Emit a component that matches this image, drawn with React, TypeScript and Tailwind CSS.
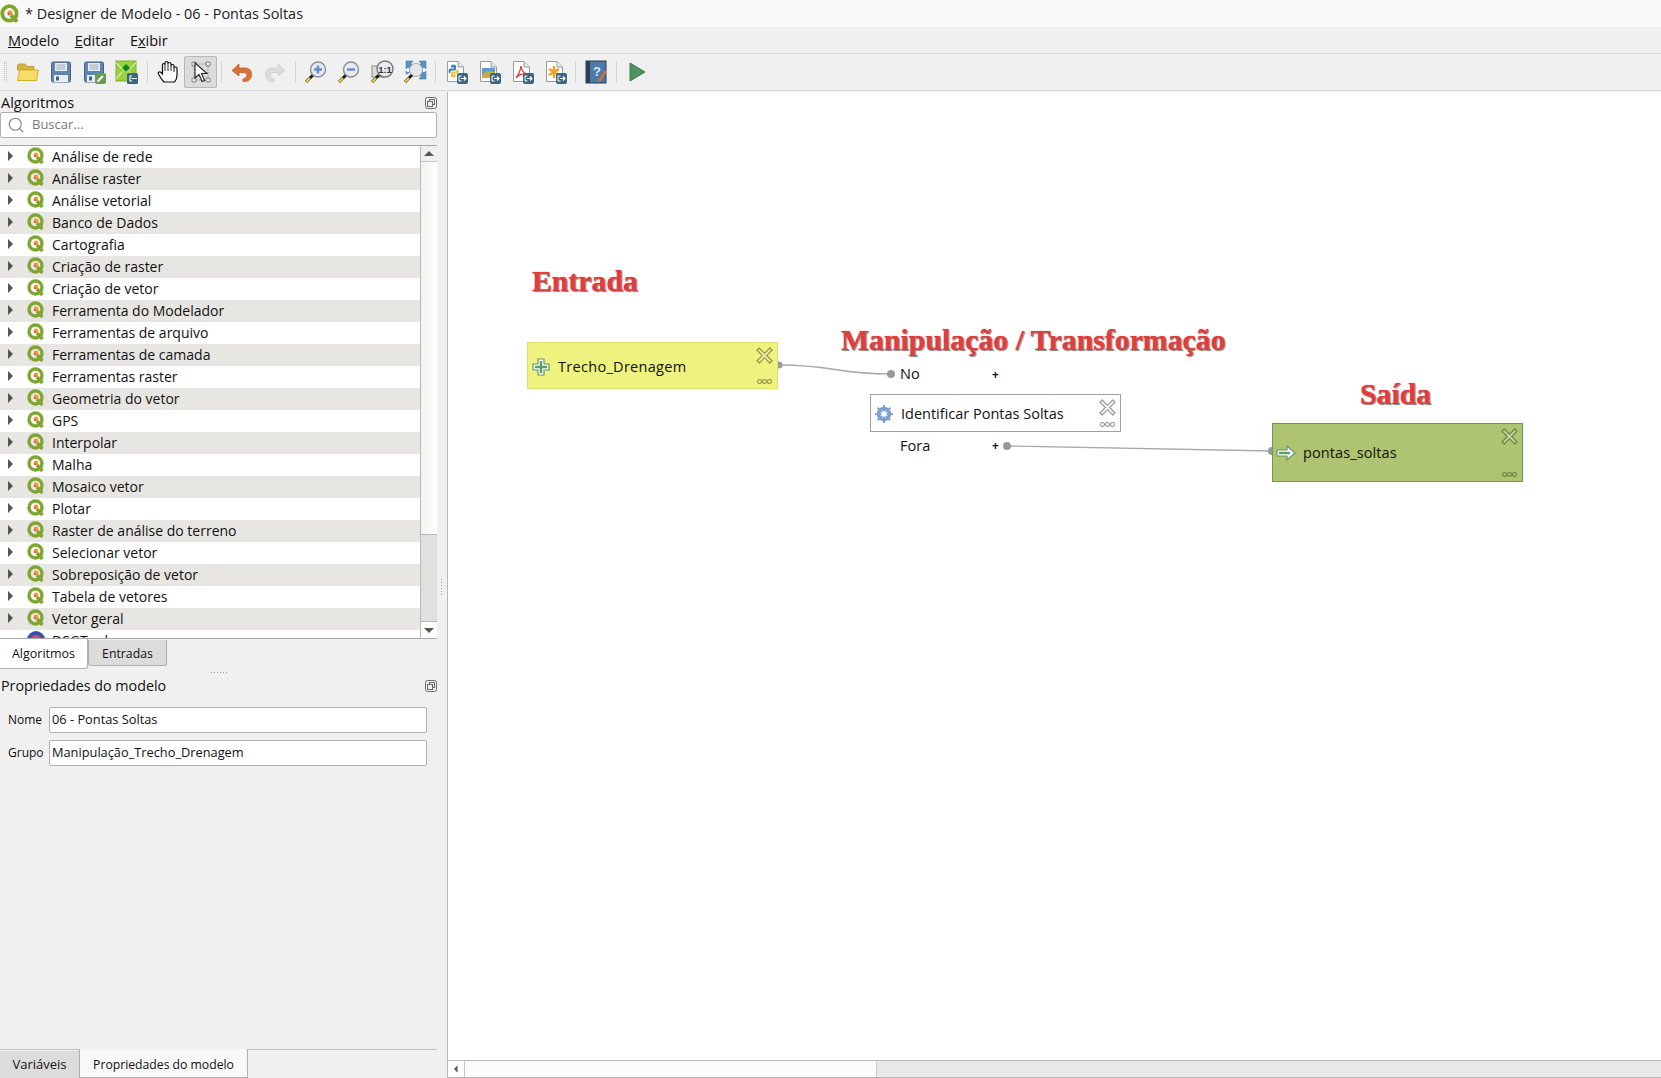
import { ChevronLeft, Search } from "lucide-react";

const font = "font-['Open_Sans','Noto_Sans',sans-serif]";

const algorithms = [
  "Análise de rede",
  "Análise raster",
  "Análise vetorial",
  "Banco de Dados",
  "Cartografia",
  "Criação de raster",
  "Criação de vetor",
  "Ferramenta do Modelador",
  "Ferramentas de arquivo",
  "Ferramentas de camada",
  "Ferramentas raster",
  "Geometria do vetor",
  "GPS",
  "Interpolar",
  "Malha",
  "Mosaico vetor",
  "Plotar",
  "Raster de análise do terreno",
  "Selecionar vetor",
  "Sobreposição de vetor",
  "Tabela de vetores",
  "Vetor geral",
];

function QgisIcon({ size = 18 }: { size?: number }) {
  return (
    <svg width={size} height={size} viewBox="0 0 18 18" className="shrink-0">
      <circle cx="8.5" cy="8.5" r="6.5" fill="none" stroke="#7fa62f" strokeWidth="3.4" />
      <path d="M10 10 L15.5 16" stroke="#7fa62f" strokeWidth="3.4" />
      <circle cx="9" cy="8" r="2.4" fill="#ee9b3e" />
      <circle cx="8" cy="9" r="1.1" fill="#d9534f" />
    </svg>
  );
}

function ExportBadge() {
  return (
    <g>
      <rect x="13" y="13" width="11" height="11" rx="2" fill="#3e6480" />
      <path d="M15 16 H17.5 M15 16 V21 H17.5" stroke="#fff" strokeWidth="1" fill="none" />
      <path d="M17 18.5 H22 M20 16.5 L22 18.5 L20 20.5" stroke="#fff" strokeWidth="1.2" fill="none" />
    </g>
  );
}

function Page({ children }: { children?: React.ReactNode }) {
  return (
    <svg width="24" height="24" viewBox="0 0 24 24">
      <path d="M3.5 1.5 H14 L19.5 7 V21.5 H3.5 Z" fill="#fff" stroke="#9a9a9a" />
      <path d="M14 1.5 V7 H19.5" fill="#e8e8e8" stroke="#9a9a9a" />
      {children}
      <ExportBadge />
    </svg>
  );
}

function Floppy({ pencil }: { pencil?: boolean }) {
  return (
    <svg width="24" height="24" viewBox="0 0 24 24">
      <path d="M2.5 3.5 Q2.5 2 4 2 H20 Q21.5 2 21.5 3.5 V20.5 Q21.5 22 20 22 H4 Q2.5 22 2.5 20.5 Z" fill="#5e85ad" stroke="#41658c" />
      <rect x="6" y="3" width="12" height="8" fill="#e9edf0" />
      <path d="M7.5 5 H16.5 M7.5 7 H16.5 M7.5 9 H16.5" stroke="#8a9aaa" strokeWidth="0.8" />
      <rect x="5" y="15" width="14" height="7" fill="#e9edf0" />
      <rect x="7" y="16.5" width="3" height="4" fill="#41658c" />
      {pencil && (
        <g>
          <rect x="13" y="13" width="11" height="11" rx="2" fill="#6b9a55" />
          <path d="M15.5 21.5 L21 16" stroke="#fff" strokeWidth="2" />
        </g>
      )}
    </svg>
  );
}

function Magnifier({ children }: { children?: React.ReactNode }) {
  return (
    <svg width="24" height="24" viewBox="0 0 24 24">
      <path d="M2 22 L9 15" stroke="#1c1c1c" strokeWidth="3" />
      <path d="M2 22 L6 18" stroke="#e8c94a" strokeWidth="2.4" />
      <circle cx="14" cy="9.5" r="7.5" fill="#e7eaee" stroke="#8b8f94" strokeWidth="1.4" />
      {children}
    </svg>
  );
}

function ToolButton({ children, active }: { children: React.ReactNode; active?: boolean }) {
  return (
    <div
      className={`flex h-[32px] w-[33px] shrink-0 items-center justify-center rounded-[2px] ${
        active ? "border border-[#b8b8b8] bg-[#dcdcdc]" : ""
      }`}
    >
      {children}
    </div>
  );
}

function Separator() {
  return <div className="mx-[3.5px] h-[22px] w-px shrink-0 bg-[#d4d4d4]" />;
}

function Toolbar() {
  return (
    <div className="flex h-[38px] shrink-0 items-center border-y border-[#d8d8d8] bg-[#f0f0f0]">
      <div className="ml-[4px] mr-[4px] h-[20px] w-[3px] border-x border-dotted border-[#c4c4c4]" />
      <ToolButton>
        <svg width="24" height="24" viewBox="0 0 24 24">
          <path d="M1.5 6 Q1.5 4 3.5 4 H9 L11 6.5 H18 V10 H1.5 Z" fill="#d9b53f" stroke="#c29a2c" />
          <path d="M1.5 20.5 L3.5 10 H22.5 L20.5 20.5 Z" fill="#f7dc6a" stroke="#d0ac34" />
        </svg>
      </ToolButton>
      <ToolButton>
        <Floppy />
      </ToolButton>
      <ToolButton>
        <Floppy pencil />
      </ToolButton>
      <ToolButton>
        <svg width="24" height="24" viewBox="0 0 24 24">
          <rect x="1" y="1" width="20" height="20" fill="#9bd13f" stroke="#7fae33" />
          <path d="M1 3 L11 12 L21 3 M1 19 L8 11 M21 19 L14 11" stroke="#fff" strokeWidth="1" fill="none" />
          <path d="M11 4 L15 8 L11 12 L7 8 Z" fill="#0a8a1c" />
          <rect x="12" y="13" width="11" height="11" rx="1.5" fill="#3e6480" />
          <path d="M15 16 H17 M15 16 V21 H17 M16.5 18.5 H22" stroke="#fff" strokeWidth="1.1" fill="none" />
        </svg>
      </ToolButton>
      <Separator />
      <ToolButton>
        <svg width="24" height="24" viewBox="0 0 24 24">
          <path
            d="M8 22 Q6 20 3 15 Q1.500 12.500 3 12 Q4.500 11.500 6.500 14 V5 Q6.500 3.500 7.800 3.500 Q9 3.500 9 5 V3 Q9 1.500 10.500 1.500 Q12 1.500 12 3 V4 Q12 2.500 13.500 2.500 Q15 2.500 15 4 V6 Q15 4.500 16.500 4.500 Q18 4.500 18 6 V8 Q18.500 7 19.800 7 Q21 7 21 8.500 V15 Q21 19 18.500 22 Z"
            fill="#fff"
            stroke="#111"
            strokeWidth="1.200"
          />
          <path d="M9 5 V11 M12 4 V11 M15 6 V11 M18 8 V12" stroke="#111" strokeWidth="0.900" />
        </svg>
      </ToolButton>
      <ToolButton active>
        <svg width="24" height="24" viewBox="0 0 24 24">
          <path d="M3 2 H7 V6 H3 Z M17 2 H21 V6 H17 Z M3 18 H7 V22 H3 Z M17 18 H21 V22 H17 Z" fill="#e8e8e8" stroke="#777" strokeWidth="0.800" />
          <path d="M7 4 H17 M5 6 V18 M7 20 H17 M19 6 V18" stroke="#777" strokeDasharray="1.500 1.500" strokeWidth="0.800" />
          <path d="M6 3 L6 18 L10 14.500 L13 21.500 L15.500 20.500 L12.500 13.500 L18 13.500 Z" fill="#fff" stroke="#222" strokeWidth="1.100" />
        </svg>
      </ToolButton>
      <Separator />
      <ToolButton>
        <svg width="24" height="24" viewBox="0 0 24 24">
          <path d="M9 4 L2 10.500 L9 16 V12.500 H14 Q17 12.500 17 15.500 Q17 18 13 19 V21.500 H15.500 Q21.500 20.500 21.500 14.500 Q21.500 8 15 8 H9 Z" fill="#d9703a" stroke="#c45e2b" strokeWidth="0.800" />
        </svg>
      </ToolButton>
      <ToolButton>
        <svg width="24" height="24" viewBox="0 0 24 24">
          <path d="M15 4 L22 10.500 L15 16 V12.500 H10 Q7 12.500 7 15.500 Q7 18 11 19 V21.500 H8.500 Q2.500 20.500 2.500 14.500 Q2.500 8 9 8 H15 Z" fill="#dcdcdc" stroke="#cfcfcf" strokeWidth="0.800" />
        </svg>
      </ToolButton>
      <Separator />
      <ToolButton>
        <Magnifier>
          <path d="M14 5.500 V13.500 M10 9.500 H18" stroke="#5b8fd0" strokeWidth="2.400" />
        </Magnifier>
      </ToolButton>
      <ToolButton>
        <Magnifier>
          <path d="M10 9.500 H18" stroke="#5b8fd0" strokeWidth="2.400" />
        </Magnifier>
      </ToolButton>
      <ToolButton>
        <svg width="24" height="24" viewBox="0 0 24 24">
          <rect x="2" y="6" width="12" height="11" fill="#ddd" stroke="#888" />
          <path d="M2 22 L9 15" stroke="#1c1c1c" strokeWidth="3" />
          <path d="M2 22 L6 18" stroke="#e8c94a" strokeWidth="2.400" />
          <circle cx="15" cy="9" r="8" fill="#e7eaee" stroke="#777" strokeWidth="1.400" />
          <text x="15" y="12.500" textAnchor="middle" fontSize="9.500" fontWeight="700" fill="#333" fontFamily="Liberation Sans">
            1:1
          </text>
        </svg>
      </ToolButton>
      <ToolButton>
        <svg width="24" height="24" viewBox="0 0 24 24">
          <path d="M3 1 H10 L8 3.500 L10.500 6 L7 9 L5 7 L3 9 Z M23 1 H16 L18 3.500 L15.500 6 L19 9 L21 7 L23 9 Z M23 19 H16 L18 16.500 L15.500 14 L19 11 L21 13 L23 11 Z M3 11 L5 13 L7 11 L6 13 L3 14 Z" fill="#5b8fc4" stroke="#4a7cae" strokeWidth="0.600" />
          <circle cx="13" cy="10" r="6.500" fill="#e4e6e8" stroke="#a8a8a8" />
          <path d="M2 22 L9 15" stroke="#1c1c1c" strokeWidth="3" />
          <path d="M2 22 L6 18" stroke="#e8c94a" strokeWidth="2.400" />
        </svg>
      </ToolButton>
      <Separator />
      <ToolButton>
        <Page>
          <path d="M6 13.500 Q4.500 13.500 4.500 11 Q4.500 8.500 7 8.500 H10 V7.500 H7 V6 Q7 4.500 9.500 4.500 Q12 4.500 12 6 V9 Q12 10.500 10.500 10.500 H8 Q6.500 10.500 6.500 12 Z" fill="#3f7fb8" />
          <path d="M13 9 Q14.500 9 14.500 11 Q14.500 13.500 12 13.500 H9 V14.500 H12 V16 Q12 17.500 9.500 17.500 Q7 17.500 7 16 V13 Q7 11.500 8.500 11.500 H11 Q12.500 11.500 12.500 10 Z" fill="#f3c53b" />
        </Page>
      </ToolButton>
      <ToolButton>
        <Page>
          <rect x="5" y="8" width="13" height="10" fill="#5c9bd6" />
          <path d="M5 15 L9 11 L18 12 V18 H5 Z" fill="#c9a74a" />
        </Page>
      </ToolButton>
      <ToolButton>
        <Page>
          <path d="M6 18 Q10 13 11 6 Q12 13 17 14 Q10 13 6 18 Z" fill="none" stroke="#df3b30" strokeWidth="1.300" />
        </Page>
      </ToolButton>
      <ToolButton>
        <Page>
          <path d="M11 6 V18 M6 9 L16 15 M16 9 L6 15" stroke="#f39a1f" strokeWidth="2.200" />
        </Page>
      </ToolButton>
      <Separator />
      <ToolButton>
        <svg width="24" height="24" viewBox="0 0 24 24">
          <rect x="2" y="1" width="20" height="22" fill="#4c79a8" stroke="#2c3e50" />
          <rect x="2" y="1" width="4" height="22" fill="#2c3e50" />
          <text x="13" y="16" textAnchor="middle" fontSize="13" fontWeight="700" fill="#dfe7f0" fontFamily="Liberation Sans">
            ?
          </text>
          <path d="M15 21 L22 11" stroke="#d9703a" strokeWidth="2.500" />
        </svg>
      </ToolButton>
      <Separator />
      <ToolButton>
        <svg width="24" height="24" viewBox="0 0 24 24">
          <path d="M5 3 L20 12 L5 21 Z" fill="#4f9160" stroke="#3f7a4e" />
        </svg>
      </ToolButton>
    </div>
  );
}

function DockButton() {
  return (
    <svg width="12" height="12" viewBox="0 0 12 12">
      <rect x="0.500" y="0.500" width="11" height="11" rx="2" fill="none" stroke="#6a6a6a" />
      <rect x="4.500" y="2.500" width="5" height="5" fill="none" stroke="#6a6a6a" />
      <rect x="2.500" y="4.500" width="5" height="5" fill="#f0f0f0" stroke="#6a6a6a" />
    </svg>
  );
}

function Tree() {
  return (
    <div className="mt-[7px] flex h-[494px] overflow-hidden border-y border-[#a8a8a8] bg-white">
      <div className="min-w-0 flex-1 overflow-hidden">
        {algorithms.map((name, i) => (
          <div
            key={name}
            className={`flex h-[22px] items-center pb-[2px] text-[14px] text-[#111] ${i % 2 === 1 ? "bg-[#e8e6e3]" : "bg-white"}`}
          >
            <span className="ml-[8px] mr-[14px] h-0 w-0 border-y-[5px] border-l-[5px] border-y-transparent border-l-[#555]" />
            <span className="mr-[7px]">
              <QgisIcon />
            </span>
            {name}
          </div>
        ))}
        <div className="flex h-[22px] items-center pb-[2px] text-[14px] text-[#111]">
          <span className="ml-[27px] mr-[7px] h-[18px] w-[18px] rounded-full border-[4px] border-[#3a4fb0] bg-[#d9534f]" />
          DSGTools
        </div>
      </div>
      <div className="flex w-[17px] shrink-0 flex-col border-l border-[#b8b8b8] bg-[#f0f0f0]">
        <div className="flex h-[16px] items-center justify-center border-b border-[#c8c8c8]">
          <span className="h-0 w-0 border-x-[5px] border-b-[5px] border-x-transparent border-b-[#555]" />
        </div>
        <div className="h-[373px] border-b border-[#b8b8b8] bg-gradient-to-r from-[#f2f2f2] to-white" />
        <div className="flex-1 bg-[#e0e0e0]" />
        <div className="flex h-[17px] items-center justify-center border-t border-[#b8b8b8] bg-white">
          <span className="h-0 w-0 border-x-[5px] border-t-[5px] border-x-transparent border-t-[#555]" />
        </div>
      </div>
    </div>
  );
}

function LeftPanel() {
  return (
    <aside className="relative flex w-[447px] shrink-0 flex-col bg-[#f0f0f0]">
      <div className="absolute left-[441px] top-[487px] flex flex-col gap-[2px]">
        {[0, 1, 2, 3, 4, 5].map((i) => (
          <span key={i} className="h-px w-px bg-[#9a9a9a]" />
        ))}
      </div>
      <div className="flex flex-1 flex-col pr-[10px]">
        <div className="flex h-[20px] items-center justify-between pl-[1px] pt-[2px] text-[14.500px] text-[#111]">
          <span>Algoritmos</span>
          <DockButton />
        </div>
        <div className="flex h-[26px] items-center gap-[7px] rounded-[2px] border border-[#b0b0b0] bg-white pl-[6px] text-[13px] text-[#777]">
          <Search size={18} strokeWidth={1.5} className="text-[#888]" />
          Buscar...
        </div>
        <Tree />
        <div className="flex h-[30px] items-start">
          <div className="flex h-[30px] w-[88px] items-center justify-center rounded-br-[3px] border-b border-r border-[#b0b0b0] bg-white pt-[2px] text-[12.500px] text-[#111]">
            Algoritmos
          </div>
          <div className="mt-[1px] flex h-[26px] w-[79px] items-center justify-center rounded-b-[3px] border border-t-0 border-[#b0b0b0] bg-[#dcdcdc] pt-[3px] text-[12.300px] text-[#111]">
            Entradas
          </div>
        </div>
        <div className="mt-[3px] flex h-[3px] justify-center gap-[2px]">
          {[0, 1, 2, 3, 4, 5].map((i) => (
            <span key={i} className="h-px w-px bg-[#9a9a9a]" />
          ))}
        </div>
        <div className="flex h-[22px] items-center justify-between pl-[1px] text-[14.300px] text-[#111]">
          <span>Propriedades do modelo</span>
          <DockButton />
        </div>
        <div className="mt-[10px] flex items-center text-[12.800px] text-[#111]">
          <span className="w-[49px] pl-[8px] text-[12px]">Nome</span>
          <div className="flex h-[26px] w-[378px] items-center rounded-[2px] border border-[#b0b0b0] bg-white pl-[2px]">06 - Pontas Soltas</div>
        </div>
        <div className="mt-[7px] flex items-center text-[12.800px] text-[#111]">
          <span className="w-[49px] pl-[8px] text-[12px]">Grupo</span>
          <div className="flex h-[26px] w-[378px] items-center rounded-[2px] border border-[#b0b0b0] bg-white pl-[2px]">Manipulação_Trecho_Drenagem</div>
        </div>
        <div className="flex-1" />
        <div className="flex h-[29px] items-end border-t border-[#c0c0c0] text-[13px] text-[#111]">
          <div className="flex h-[27px] w-[79px] items-center justify-center bg-[#dcdcdc]">Variáveis</div>
          <div className="-mt-px flex h-[29px] w-[169px] items-center justify-center border-x border-b border-[#b0b0b0] bg-[#f8f8f8] pt-[5px] text-[12.200px]">
            Propriedades do modelo
          </div>
        </div>
      </div>
    </aside>
  );
}

function CloseMark({ color }: { color: string }) {
  return (
    <svg width="17" height="17" viewBox="0 0 16 16">
      <path d="M3 1 L8 6 L13 1 L15 3 L10 8 L15 13 L13 15 L8 10 L3 15 L1 13 L6 8 L1 3 Z" fill="#fff" fillOpacity="0.350" stroke={color} strokeWidth="1.300" />
    </svg>
  );
}

function MoreMark({ color }: { color: string }) {
  return (
    <svg width="15" height="5" viewBox="0 0 15 5">
      <circle cx="2.500" cy="2.500" r="2" fill="none" stroke={color} strokeWidth="1.200" />
      <circle cx="7.500" cy="2.500" r="2" fill="none" stroke={color} strokeWidth="1.200" />
      <circle cx="12.500" cy="2.500" r="2" fill="none" stroke={color} strokeWidth="1.200" />
    </svg>
  );
}

function Heading({ text, className }: { text: string; className: string }) {
  return (
    <div
      className={`absolute whitespace-nowrap font-['Liberation_Serif',serif] text-[29.800px] leading-none font-bold text-[#e23d3d] [text-shadow:1px_1px_1px_#808080,0_0_1px_#e23d3d] ${className}`}
    >
      {text}
    </div>
  );
}

function ModelNode({
  className,
  label,
  icon,
  mark,
  labelClass,
}: {
  className: string;
  label: string;
  icon: React.ReactNode;
  mark: string;
  labelClass?: string;
}) {
  return (
    <div className={`absolute flex items-center border text-[14.500px] text-[#111] ${className}`}>
      <div className="ml-[3px] mr-[7px] flex w-[20px] justify-center">{icon}</div>
      <span className={labelClass}>{label}</span>
      <div className="absolute right-[4px] top-[4px]">
        <CloseMark color={mark} />
      </div>
      <div className="absolute bottom-[4px] right-[5px] flex">
        <MoreMark color={mark} />
      </div>
    </div>
  );
}

function Canvas() {
  return (
    <main className="flex min-w-0 flex-1 flex-col border-l border-[#b8b8b8] bg-white">
      <div className="relative flex-1 overflow-hidden">
        <svg className="absolute inset-0 h-full w-full">
          <g transform="translate(-448 -92)" fill="none" stroke="#a8a8a8" strokeWidth="1.300">
            <path d="M779 365 C835 365 835 374 891 374" />
            <path d="M1007 446 L1272 451" />
          </g>
          <g transform="translate(-448 -92)" fill="#999">
            <circle cx="779" cy="365" r="3.500" />
            <circle cx="891" cy="374" r="4" />
            <circle cx="1007" cy="446" r="4" />
            <circle cx="1272" cy="451" r="4" />
          </g>
        </svg>

        <Heading text="Entrada" className="left-[84px] top-[174px]" />
        <Heading text="Manipulação / Transformação" className="left-[393px] top-[233px]" />
        <Heading text="Saída" className="left-[912px] top-[287px]" />

        <ModelNode
          className="left-[79px] top-[250px] h-[47px] w-[251px] border-[#e6dd6c] bg-[#eef27f] pt-[2px]"
          label="Trecho_Drenagem"
          mark="#9a9a4a"
          labelClass="tracking-[0.3px]"
          icon={
            <svg width="18" height="18" viewBox="0 0 18 18">
              <path d="M6 1 H12 V6 H17 V12 H12 V17 H6 V12 H1 V6 H6 Z" fill="#fff" stroke="#5f9a6a" strokeWidth="1.200" />
              <path d="M9 3 V15 M3 9 H15" stroke="#5f9a6a" strokeWidth="2.400" />
            </svg>
          }
        />

        <div className="absolute left-[452px] top-[275px] text-[14.500px] leading-none text-[#111]">No</div>
        <div className="absolute left-[544px] top-[277px] text-[12px] leading-none font-bold text-[#111]">+</div>

        <ModelNode
          className="left-[422px] top-[302px] h-[38px] w-[251px] border-[#a0a0a0] bg-white pt-[2px]"
          label="Identificar Pontas Soltas"
          mark="#a0a0a0"
          icon={
            <svg width="20" height="20" viewBox="0 0 20 20">
              <circle cx="10" cy="10" r="5.500" fill="none" stroke="#7ea1d3" strokeWidth="3.500" />
              <path d="M10 1 V19 M1 10 H19 M3.600 3.600 L16.400 16.400 M16.400 3.600 L3.600 16.400" stroke="#7ea1d3" strokeWidth="2" />
              <circle cx="10" cy="10" r="2.800" fill="#fff" />
            </svg>
          }
        />

        <div className="absolute left-[452px] top-[347px] text-[14.500px] leading-none text-[#111]">Fora</div>
        <div className="absolute left-[544px] top-[348px] text-[12px] leading-none font-bold text-[#111]">+</div>

        <ModelNode
          className="left-[824px] top-[331px] h-[59px] w-[251px] border-[#5e9e55] bg-[#aec470]"
          label="pontas_soltas"
          mark="#6d8a4a"
          labelClass="tracking-[0.1px]"
          icon={
            <svg width="20" height="16" viewBox="0 0 20 16">
              <path d="M1 5 H11 V1 L19 8 L11 15 V11 H1 Z" fill="#fff" stroke="#5f9a6a" strokeWidth="1.200" />
              <path d="M3 8 H14" stroke="#5f9a6a" strokeWidth="2.400" />
            </svg>
          }
        />
      </div>

      <div className="flex h-[18px] shrink-0 border-y border-[#b8b8b8] bg-[#e8e8e8]">
        <div className="flex w-[17px] items-center justify-center border-r border-[#c8c8c8] bg-white">
          <ChevronLeft size={12} className="text-[#555]" fill="#555" />
        </div>
        <div className="w-[412px] border-r border-[#c8c8c8] bg-[#fbfbfb]" />
      </div>
    </main>
  );
}

export default function App() {
  return (
    <div className={`flex h-screen w-full flex-col overflow-hidden bg-[#f0f0f0] ${font}`}>
      <div className="flex h-[27px] shrink-0 items-center gap-[5px] bg-[#f9f9f9] pl-[0px] text-[14.450px] text-[#222]">
        <QgisIcon size={20} />* Designer de Modelo - 06 - Pontas Soltas
      </div>
      <div className="flex h-[26px] shrink-0 items-center gap-[15.500px] pl-[8px] pt-[2px] text-[14.500px] text-[#111]">
        <span>
          <u>M</u>odelo
        </span>
        <span>
          <u>E</u>ditar
        </span>
        <span>
          E<u>x</u>ibir
        </span>
      </div>
      <Toolbar />
      <div className="flex min-h-0 flex-1 pt-px">
        <LeftPanel />
        <Canvas />
      </div>
    </div>
  );
}
